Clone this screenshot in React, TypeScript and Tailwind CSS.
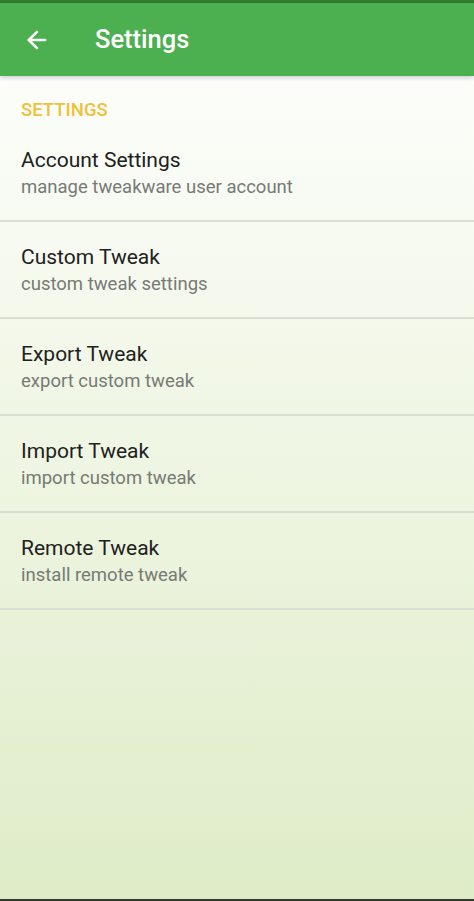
import { ArrowLeft } from "lucide-react";

const items = [
  { title: "Account Settings", sub: "manage tweakware user account" },
  { title: "Custom Tweak", sub: "custom tweak settings" },
  { title: "Export Tweak", sub: "export custom tweak" },
  { title: "Import Tweak", sub: "import custom tweak" },
  { title: "Remote Tweak", sub: "install remote tweak" },
];

const App = () => {
  return (
    <div
      className="h-[901px] w-full flex flex-col bg-gradient-to-b from-white to-[#dfecc7] overflow-hidden"
      style={{ fontFamily: "Roboto, 'Noto Sans', sans-serif" }}
    >
      <div className="h-[3px] bg-[#2e7d32]" />
      <header className="relative z-10 h-[73px] bg-[#4caf50] flex items-center shadow-[0_2px_4px_rgba(0,0,0,0.18)]">
        <ArrowLeft className="ml-[23px] w-[28px] h-[28px] text-white" strokeWidth={2.2} />
        <h1 className="ml-[44px] text-white text-[25.5px] font-medium">Settings</h1>
      </header>

      <div className="flex-1 flex flex-col">
        <div className="h-[49px] flex items-end px-[21px] pb-[3px]">
          <span className="text-[#efc13a] text-[18.5px] font-medium leading-[24px]">SETTINGS</span>
        </div>
        {items.map((it) => (
          <div key={it.title} className="h-[97px] flex flex-col border-b-2 border-[#d9ddd4] px-[21px] pt-[21px]">
            <span className="text-[#212121] text-[21px] leading-[28px]">{it.title}</span>
            <span className="text-[#777a76] text-[18.5px] leading-[24px] mt-[1px]">{it.sub}</span>
          </div>
        ))}
      </div>
      <div className="h-[2px] bg-[#2f3b30]" />
    </div>
  );
};

export default App;
